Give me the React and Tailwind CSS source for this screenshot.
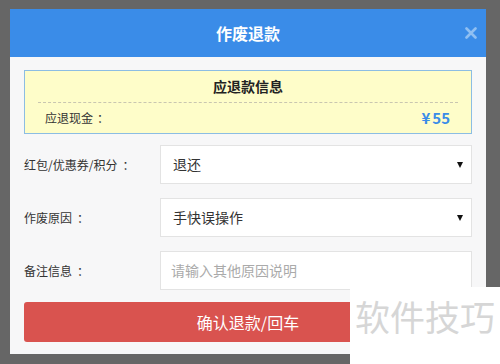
const Row = ({ label, children }) => (
  <div className="flex items-center h-[39px]">
    <div className="w-[136px] text-[12px] text-[#333]">
      {label}
      <span className="ml-[5px]">：</span>
    </div>
    {children}
  </div>
);

const SelectBox = ({ value }) => (
  <div className="flex-1 h-full flex items-center justify-between bg-white border border-[#e3e3e3] pl-[12px] pr-[8px]">
    <span className="text-[14px] text-[#333]">{value}</span>
    <span className="w-0 h-0 border-l-[3.5px] border-r-[3.5px] border-t-[6px] border-l-transparent border-r-transparent border-t-[#111]" />
  </div>
);

export default function App() {
  return (
    <div
      className="relative w-[500px] h-[364px] bg-[#666666] overflow-hidden"
      style={{ fontFamily: '"Noto Sans CJK SC", "Noto Sans", sans-serif' }}
    >
      <div className="absolute left-[10px] top-[9px] w-[476px] h-[345px] bg-[#f7f7f8] flex flex-col">
        <div className="relative h-[48px] bg-[#3a8ce8] flex items-center justify-center">
          <span className="text-[16px] font-bold text-white">作废退款</span>
          <svg
            className="absolute right-[9px] top-[18px]"
            width="12"
            height="12"
            viewBox="0 0 12 12"
          >
            <path d="M1.5 1.5L10.5 10.5M10.5 1.5L1.5 10.5" stroke="#8fbff2" strokeWidth="2.6" strokeLinecap="round" />
          </svg>
        </div>

        <div className="flex flex-col px-[14px] pt-[13px]">
          <div className="h-[64px] bg-[#fefdc9] border border-[#8cbde3] px-[13px] flex flex-col">
            <div className="h-[31px] flex items-center justify-center text-[14px] font-bold text-[#222]">
              应退款信息
            </div>
            <div className="border-t border-dashed border-[#c9c6b0]" />
            <div className="flex-1 flex items-center justify-between pl-[7px] pr-[8px]">
              <span className="text-[12px] text-[#333]">
                应退现金<span className="ml-[4px]">：</span>
              </span>
              <span className="text-[15px] font-bold text-[#3a8ce8]">
                ¥<span className="ml-[2px]">55</span>
              </span>
            </div>
          </div>

          <div className="mt-[11px] flex flex-col gap-[14px]">
            <Row label="红包/优惠券/积分">
              <SelectBox value="退还" />
            </Row>
            <Row label="作废原因">
              <SelectBox value="手快误操作" />
            </Row>
            <Row label="备注信息">
              <div className="flex-1 h-full flex items-center bg-white border border-[#e3e3e3] pl-[10px]">
                <span className="text-[14px] text-[#aaa]">请输入其他原因说明</span>
              </div>
            </Row>
          </div>

          <button className="mt-[12px] h-[40px] w-full rounded-[3px] bg-[#d9534f] text-white text-[16px] flex items-center justify-center">
            确认退款/回车
          </button>
        </div>
      </div>

      <div className="absolute left-[350px] top-[287px] w-[150px] h-[77px] bg-white flex items-start pl-[5px] pt-[11px]">
        <span className="text-[35px] leading-none text-[#d6d6d6]">软件技巧</span>
      </div>
    </div>
  );
}
